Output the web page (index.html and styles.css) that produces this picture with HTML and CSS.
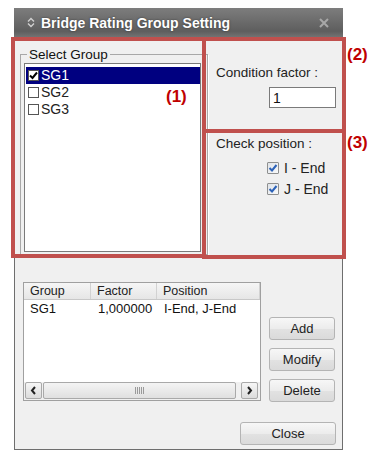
FILE: index.html
```html
<!DOCTYPE html>
<html>
  <head>
    <meta charset="UTF-8">
    <title>Bridge Rating Group Setting</title>
    <link rel="stylesheet" href="styles.css">
  </head>
  <body>
    <div class="shot">
      <div class="dlg">
        <div class="titlebar">
          <svg class="ticon" width="8" height="11" viewBox="0 0 8 11">
            <polyline points="1,4.5 4,1.5 7,4.5" fill="none" stroke="#d0d0d0" stroke-width="1.4"/>
            <polyline points="1,6.5 4,9.5 7,6.5" fill="none" stroke="#d0d0d0" stroke-width="1.4"/>
          </svg>
          <span class="ttext">Bridge Rating Group Setting</span>
          <svg class="tclose" width="10" height="10" viewBox="0 0 10 10">
            <path d="M1 1 L9 9 M9 1 L1 9" stroke="#a8a8a8" stroke-width="2"/>
          </svg>
        </div>
        <div class="client">
          <div class="top">
            <fieldset class="grp">
              <legend>Select Group</legend>
              <div class="listbox">
                <div class="item sel">
                  <span class="lcb">
                    <svg width="9" height="9" viewBox="0 0 9 9"><polyline points="1,4.5 3.5,7 8,1.5" fill="none" stroke="#000" stroke-width="2"/></svg>
                  </span>SG1
                </div>
                <div class="item"><span class="lcb"></span>SG2</div>
                <div class="item"><span class="lcb"></span>SG3</div>
              </div>
            </fieldset>
            <div class="side">
              <div class="lbl">Condition factor :</div>
              <div class="factor">1</div>
              <div class="lbl check-lbl">Check position :</div>
              <div class="pos">
                <span class="wcb">
                  <svg width="10" height="10" viewBox="0 0 10 10"><polyline points="1.5,5 4,7.5 8.5,2" fill="none" stroke="#2c62b8" stroke-width="2"/></svg>
                </span>I - End
              </div>
              <div class="pos">
                <span class="wcb">
                  <svg width="10" height="10" viewBox="0 0 10 10"><polyline points="1.5,5 4,7.5 8.5,2" fill="none" stroke="#2c62b8" stroke-width="2"/></svg>
                </span>J - End
              </div>
            </div>
          </div>

          <div class="bottom">
            <div class="lv">
              <div class="lv-head">
                <span class="c1">Group</span>
                <span class="c2">Factor</span>
                <span class="c3">Position</span>
              </div>
              <div class="lv-body">
                <div class="lv-row">
                  <span class="c1">SG1</span>
                  <span class="c2">1,000000</span>
                  <span class="c3">I-End, J-End</span>
                </div>
              </div>
              <div class="hscroll">
                <span class="sbtn">
                  <svg width="7" height="9" viewBox="0 0 7 9"><polyline points="5,1 2,4.5 5,8" fill="none" stroke="#222" stroke-width="2"/></svg>
                </span>
                <span class="thumb"><span class="grip"></span></span>
                <span class="sbtn">
                  <svg width="7" height="9" viewBox="0 0 7 9"><polyline points="2,1 5,4.5 2,8" fill="none" stroke="#222" stroke-width="2"/></svg>
                </span>
              </div>
            </div>
            <div class="btns">
              <button class="wbtn">Add</button>
              <button class="wbtn">Modify</button>
              <button class="wbtn">Delete</button>
            </div>
          </div>

          <div class="foot">
            <button class="wbtn close">Close</button>
          </div>
        </div>
      </div>

      <!-- annotation marks drawn over the dialog -->
      <div class="mark m1"></div>
      <div class="mark m2"></div>
      <div class="mark m3"></div>
      <span class="num n1">(1)</span>
      <span class="num n2">(2)</span>
      <span class="num n3">(3)</span>
    </div>
  </body>
</html>
```

FILE: styles.css
```css
body {
  margin: 0;
  background-color: #fff;
  font-family: "Liberation Sans", Arial, sans-serif;
  font-size: 13.5px;
  color: #111;
}
.shot {
  position: relative;
  box-sizing: border-box;
  width: 376px;
  height: 453px;
  padding: 8px 0 0 14px;
}
.dlg {
  width: 329px;
}
.titlebar {
  height: 29px;
  display: flex;
  align-items: center;
  padding: 0 14px 0 13px;
  background: linear-gradient(#7d7d7d, #5e5e5e 80%, #727272);
}
.ticon {
  margin-right: 6px;
}
.ttext {
  flex: 1;
  color: #fff;
  font-weight: bold;
  font-size: 14px;
  text-shadow: 0 0 2px #333;
}
.client {
  box-sizing: border-box;
  height: 413px;
  background-color: #f0f0f0;
  border: 1px solid #6e6e6e;
  border-top: none;
}
.top {
  display: flex;
  height: 218px;
}
.grp {
  box-sizing: border-box;
  margin: 10px 0 0 5px;
  width: 188px;
  height: 208px;
  padding: 0 3px 3px 3px;
  border: 1px solid #a8a8a8;
  box-shadow: 1px 1px 0 #fff;
}
.grp legend {
  margin-left: 3px;
  padding: 0 2px;
  line-height: 15px;
}
.listbox {
  box-sizing: border-box;
  margin-top: 1px;
  width: 177px;
  height: 189px;
  padding: 3px 0 0 1px;
  background-color: #fff;
  border: 1px solid #7a7a7a;
}
.item {
  height: 17px;
  line-height: 17px;
  display: flex;
  align-items: center;
  font-size: 14px;
  color: #222;
}
.item.sel {
  background-color: #000080;
  color: #fff;
}
.lcb {
  box-sizing: border-box;
  width: 11px;
  height: 11px;
  margin: 0 2px 0 2px;
  border: 1px solid #555;
  background-color: #fff;
  display: flex;
  align-items: center;
  justify-content: center;
}
.side {
  flex: 1;
  padding: 28px 0 0 8px;
}
.lbl {
  line-height: 16px;
  color: #222;
}
.factor {
  box-sizing: border-box;
  margin: 6px 0 0 53px;
  width: 67px;
  height: 21px;
  padding: 1px 3px;
  line-height: 18px;
  background-color: #fff;
  border: 1px solid #7a7a7a;
  font-size: 14px;
}
.check-lbl {
  margin-top: 28px;
}
.pos {
  height: 21px;
  display: flex;
  align-items: center;
  margin-left: 51px;
  font-size: 14px;
  color: #222;
}
.check-lbl + .pos {
  margin-top: 5px;
}
.wcb {
  box-sizing: border-box;
  width: 12px;
  height: 12px;
  margin-right: 5px;
  border: 1px solid #8e8f8f;
  border-radius: 1px;
  background: linear-gradient(135deg, #dfe3e8, #f8f9fa);
  display: flex;
  align-items: center;
  justify-content: center;
}
.bottom {
  display: flex;
  margin-top: 27px;
}
.lv {
  box-sizing: border-box;
  margin-left: 8px;
  width: 238px;
  height: 119px;
  border: 1px solid #a0a0a0;
  background-color: #fff;
  display: flex;
  flex-direction: column;
}
.lv-head,
.lv-row {
  display: flex;
  font-size: 12.5px;
}
.lv-head {
  height: 17px;
  line-height: 16px;
  background: linear-gradient(#f6f6f6, #e6e6e6);
  border-bottom: 1px solid #c8c8c8;
  box-sizing: border-box;
  color: #222;
}
.lv-head span {
  border-right: 1px solid #d2d2d2;
}
.c1 {
  width: 60px;
  padding-left: 6px;
}
.c2 {
  width: 59px;
  padding-left: 6px;
}
.c3 {
  flex: 1;
  padding-left: 6px;
}
.lv-body {
  flex: 1;
}
.lv-row {
  height: 17px;
  line-height: 17px;
  font-size: 13px;
  color: #111;
}
.lv-row .c1 {
  width: 61px;
}
.lv-row .c2 {
  width: 60px;
  padding-left: 7px;
}
.hscroll {
  height: 17px;
  display: flex;
  padding: 0 2px 1px 1px;
  background-color: #f0f0f0;
}
.sbtn {
  box-sizing: border-box;
  width: 17px;
  height: 17px;
  border: 1px solid #a9a9a9;
  border-radius: 2px;
  background: linear-gradient(#f6f6f6, #dcdcdc);
  display: flex;
  align-items: center;
  justify-content: center;
}
.thumb {
  box-sizing: border-box;
  flex: 1;
  margin: 0 5px 0 1px;
  border: 1px solid #a9a9a9;
  border-radius: 2px;
  background: linear-gradient(#f4f4f4, #e0e0e0);
  display: flex;
  align-items: center;
  justify-content: center;
}
.grip {
  width: 9px;
  height: 7px;
  background: repeating-linear-gradient(90deg, #9a9a9a 0 1px, transparent 1px 2px);
}
.btns {
  margin-left: 8px;
  padding-top: 35px;
  display: flex;
  flex-direction: column;
  gap: 8px;
}
.wbtn {
  box-sizing: border-box;
  width: 66px;
  height: 23px;
  padding: 0;
  border: 1px solid #b4b4b4;
  border-radius: 3px;
  background: linear-gradient(#f7f7f7, #ececec 50%, #e2e2e2 51%, #dadada);
  font-family: "Liberation Sans", Arial, sans-serif;
  font-size: 13px;
  color: #222;
}
.foot {
  display: flex;
  justify-content: flex-end;
  margin-top: 20px;
  padding-right: 6px;
}
.wbtn.close {
  width: 96px;
}
.mark {
  position: absolute;
  box-sizing: border-box;
  border: 4px solid #c0504d;
}
.m1 {
  left: 11px;
  top: 37px;
  width: 195px;
  height: 221px;
}
.m2 {
  left: 202px;
  top: 37px;
  width: 144px;
  height: 96px;
}
.m3 {
  left: 202px;
  top: 129px;
  width: 144px;
  height: 130px;
}
.num {
  position: absolute;
  color: #c00000;
  font-weight: bold;
  font-size: 17px;
}
.n1 {
  left: 166px;
  top: 87px;
}
.n2 {
  left: 347px;
  top: 45px;
}
.n3 {
  left: 347px;
  top: 133px;
}
```
